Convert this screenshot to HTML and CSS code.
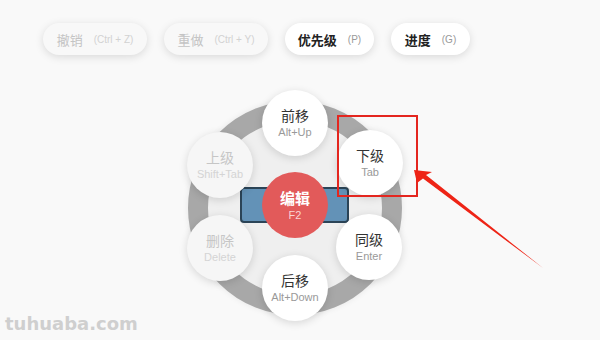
FILE: index.html
```html
<!DOCTYPE html>
<html lang="zh">
<head>
<meta charset="utf-8">
<title>思维导图快捷键</title>
<link rel="stylesheet" href="styles.css">
</head>
<body>
<div class="page">
  <div class="toolbar">
    <div class="btn btn-undo disabled"><span class="label">撤销</span><span class="hint">(Ctrl + Z)</span></div>
    <div class="btn btn-redo disabled"><span class="label">重做</span><span class="hint">(Ctrl + Y)</span></div>
    <div class="btn btn-pri"><span class="label strong">优先级</span><span class="hint">(P)</span></div>
    <div class="btn btn-prog"><span class="label strong">进度</span><span class="hint">(G)</span></div>
  </div>
  <div class="stage">
    <div class="ring"></div>
    <div class="bar"></div>
    <div class="node n-top"><span class="t">前移</span><span class="s">Alt+Up</span></div>
    <div class="node n-ul off"><span class="t">上级</span><span class="s">Shift+Tab</span></div>
    <div class="node n-ur"><span class="t">下级</span><span class="s">Tab</span></div>
    <div class="node n-ll off"><span class="t">删除</span><span class="s">Delete</span></div>
    <div class="node n-lr"><span class="t">同级</span><span class="s">Enter</span></div>
    <div class="node n-bot"><span class="t">后移</span><span class="s">Alt+Down</span></div>
    <div class="node n-mid"><span class="t">编辑</span><span class="s">F2</span></div>
    <div class="mark"></div>
    <svg class="arrow" width="600" height="340" viewBox="0 0 600 340">
      <polygon points="414,170 432,172 426,175 543,268 423,178.5 417,183" fill="#ee2416"/>
    </svg>
    <div class="watermark">tuhuaba.com</div>
  </div>
</div>
</body>
</html>
```
FILE: styles.css
```css
* { box-sizing: border-box; }
html, body { margin: 0; padding: 0; }
body {
  width: 600px;
  height: 340px;
  overflow: hidden;
  background: #f9f9f9;
  font-family: "Liberation Sans", "Noto Sans CJK SC", sans-serif;
}
.page { position: relative; width: 600px; height: 340px; }
.toolbar {
  display: flex;
  gap: 17px;
  padding: 23px 0 0 43px;
}
.btn {
  height: 32px;
  border-radius: 16px;
  background: #fff;
  box-shadow: 0 2px 8px rgba(0,0,0,0.13);
  display: flex;
  align-items: center;
  justify-content: center;
  gap: 11px;
  font-size: 13px;
}
.btn-undo, .btn-redo { width: 104px; }
.btn-pri { width: 89px; }
.btn-prog { width: 79px; }
.btn.disabled { background: #f8f8f8; }
.label { color: #333; font-family: "Noto Sans CJK SC", sans-serif; }
.label.strong { font-weight: 700; color: #222; }
.hint { color: #999; font-size: 10px; }
.disabled .label { color: #c4c4c4; }
.disabled .hint { color: #d2d2d2; }

.stage { position: absolute; left: 0; top: 0; width: 600px; height: 340px; }
.ring {
  position: absolute;
  left: 188px; top: 101px;
  width: 214px; height: 214px;
  border-radius: 50%;
  border: 20px solid #a8a8a8;
  background: #efefef;
  box-shadow: 0 0 6px rgba(0,0,0,0.08);
}
.bar {
  position: absolute;
  left: 240px; top: 187px;
  width: 109px; height: 36px;
  border: 2px solid #2b4457;
  border-radius: 4px;
  background: #6392b7;
}
.node {
  position: absolute;
  width: 66px; height: 66px;
  margin: -33px 0 0 -33px;
  border-radius: 50%;
  background: #fff;
  box-shadow: 0 2px 8px rgba(0,0,0,0.14);
  display: flex;
  flex-direction: column;
  align-items: center;
  justify-content: center;
  line-height: 1;
}
.node .t {
  font-family: "Noto Sans CJK SC", sans-serif;
  font-size: 14px;
  color: #333;
}
.node .s { font-size: 11px; color: #999; margin-top: 5px; }
.node.off { background: #f6f6f6; }
.node.off .t { color: #c6c6c6; }
.node.off .s { color: #d4d4d4; }
.n-top { left: 295px; top: 123px; }
.n-ul { left: 220px; top: 165px; }
.n-ur { left: 370px; top: 163px; }
.n-ll { left: 220px; top: 248px; }
.n-lr { left: 369px; top: 247px; }
.n-bot { left: 295px; top: 288px; }
.n-mid { left: 295px; top: 205px; background: #e25a5a; box-shadow: none; }
.n-mid .t { color: #fff; font-size: 15px; font-weight: 700; }
.n-mid .s { color: #fbd4d4; }
.mark {
  position: absolute;
  left: 337px; top: 115px;
  width: 81px; height: 82px;
  border: 2px solid #e4261f;
}
.arrow { position: absolute; left: 0; top: 0; }
.watermark {
  position: absolute;
  left: 5px; top: 313px;
  font-family: "DejaVu Sans", sans-serif;
  font-weight: 700;
  font-size: 18px;
  color: #cfcfcf;
}
```
